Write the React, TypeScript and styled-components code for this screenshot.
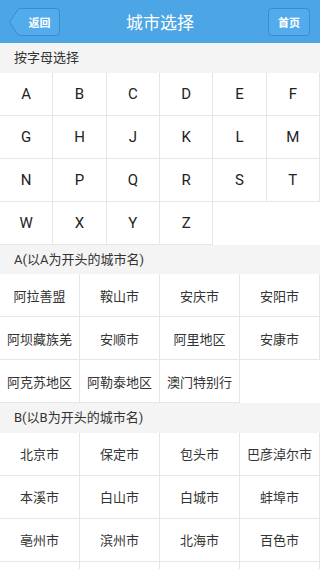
import React from "react";
import styled, { createGlobalStyle } from "styled-components";

const Global = createGlobalStyle`
  html, body { margin: 0; padding: 0; background: #ffffff; }
  body {
    font-family: Roboto, "Noto Sans CJK SC", sans-serif;
    -webkit-font-smoothing: antialiased;
  }
  * { box-sizing: border-box; }
`;

const Page = styled.div`
  width: 320px;
  height: 569px;
  background: #ffffff;
  overflow: hidden;
`;

const Header = styled.header`
  height: 43px;
  background: #4ca5e4;
  display: grid;
  grid-template-columns: 80px 1fr 80px;
  align-items: center;
`;

const Title = styled.h1`
  margin: 0;
  text-align: center;
  color: #ffffff;
  font-family: "Noto Sans CJK SC", sans-serif;
  font-size: 17px;
  font-weight: 400;
  line-height: 1;
`;

const BackButton = styled.button`
  position: relative;
  justify-self: start;
  margin-left: 9px;
  width: 51px;
  height: 28px;
  border: 0;
  padding: 0 0 0 10px;
  background: transparent;
  color: #ffffff;
  font-family: "Noto Sans CJK SC", sans-serif;
  font-size: 11px;
  font-weight: 700;
  display: flex;
  align-items: center;
  justify-content: center;
  cursor: pointer;
  svg {
    position: absolute;
    left: 0;
    top: 0;
  }
  span {
    position: relative;
  }
`;

const HomeButton = styled.button`
  justify-self: end;
  margin-right: 10px;
  width: 42px;
  height: 28px;
  border: 1px solid #3b8ccb;
  border-radius: 4px;
  background: #52abea;
  color: #ffffff;
  font-family: "Noto Sans CJK SC", sans-serif;
  font-size: 11px;
  font-weight: 700;
  padding: 0;
  cursor: pointer;
`;

const SectionLabel = styled.div`
  height: 29.5px;
  background: #f4f4f4;
  color: #333333;
  font-family: Roboto, "Noto Sans CJK SC", sans-serif;
  font-size: 13px;
  padding: 0 0 2px 14px;
  display: flex;
  align-items: center;
`;

const Grid = styled.div<{ $cols: number }>`
  display: grid;
  grid-template-columns: repeat(${(p) => p.$cols}, 1fr);
  background: #ffffff;
`;

const Cell = styled.div<{ $letter?: boolean }>`
  height: 43px;
  border-right: 1px solid #e6e6e6;
  border-bottom: 1px solid #e6e6e6;
  display: flex;
  align-items: center;
  justify-content: center;
  color: ${(p) => (p.$letter ? "#222222" : "#333333")};
  font-family: ${(p) =>
    p.$letter ? "Roboto, sans-serif" : '"Noto Sans CJK SC", sans-serif'};
  font-size: ${(p) => (p.$letter ? "15px" : "13px")};
  min-width: 0;
  white-space: nowrap;
`;

const letters = "ABCDEFGHJKLMNPQRSTWXYZ".split("");

const citiesA = [
  "阿拉善盟",
  "鞍山市",
  "安庆市",
  "安阳市",
  "阿坝藏族羌",
  "安顺市",
  "阿里地区",
  "安康市",
  "阿克苏地区",
  "阿勒泰地区",
  "澳门特别行",
];

const citiesB = [
  "北京市",
  "保定市",
  "包头市",
  "巴彦淖尔市",
  "本溪市",
  "白山市",
  "白城市",
  "蚌埠市",
  "亳州市",
  "滨州市",
  "北海市",
  "百色市",
  "",
  "",
  "",
  "",
];

const BackShape = () => (
  <svg width="51" height="28" viewBox="0 0 51 28">
    <path
      d="M12 0.5 H47 Q50.5 0.5 50.5 4 V24 Q50.5 27.5 47 27.5 H12 Q10 27.5 8.6 26 L1.4 15.4 Q0.5 14 1.4 12.6 L8.6 2 Q10 0.5 12 0.5 Z"
      fill="#52abea"
      stroke="#3b8ccb"
      strokeWidth="1"
    />
  </svg>
);

export default function App() {
  return (
    <Page>
      <Global />
      <Header>
        <BackButton>
          <BackShape />
          <span>返回</span>
        </BackButton>
        <Title>城市选择</Title>
        <HomeButton>首页</HomeButton>
      </Header>

      <SectionLabel>按字母选择</SectionLabel>
      <Grid $cols={6}>
        {letters.map((l) => (
          <Cell $letter key={l}>
            {l}
          </Cell>
        ))}
      </Grid>

      <SectionLabel>A(以A为开头的城市名)</SectionLabel>
      <Grid $cols={4}>
        {citiesA.map((c) => (
          <Cell key={c}>{c}</Cell>
        ))}
      </Grid>

      <SectionLabel>B(以B为开头的城市名)</SectionLabel>
      <Grid $cols={4}>
        {citiesB.map((c, i) => (
          <Cell key={i}>{c}</Cell>
        ))}
      </Grid>
    </Page>
  );
}
